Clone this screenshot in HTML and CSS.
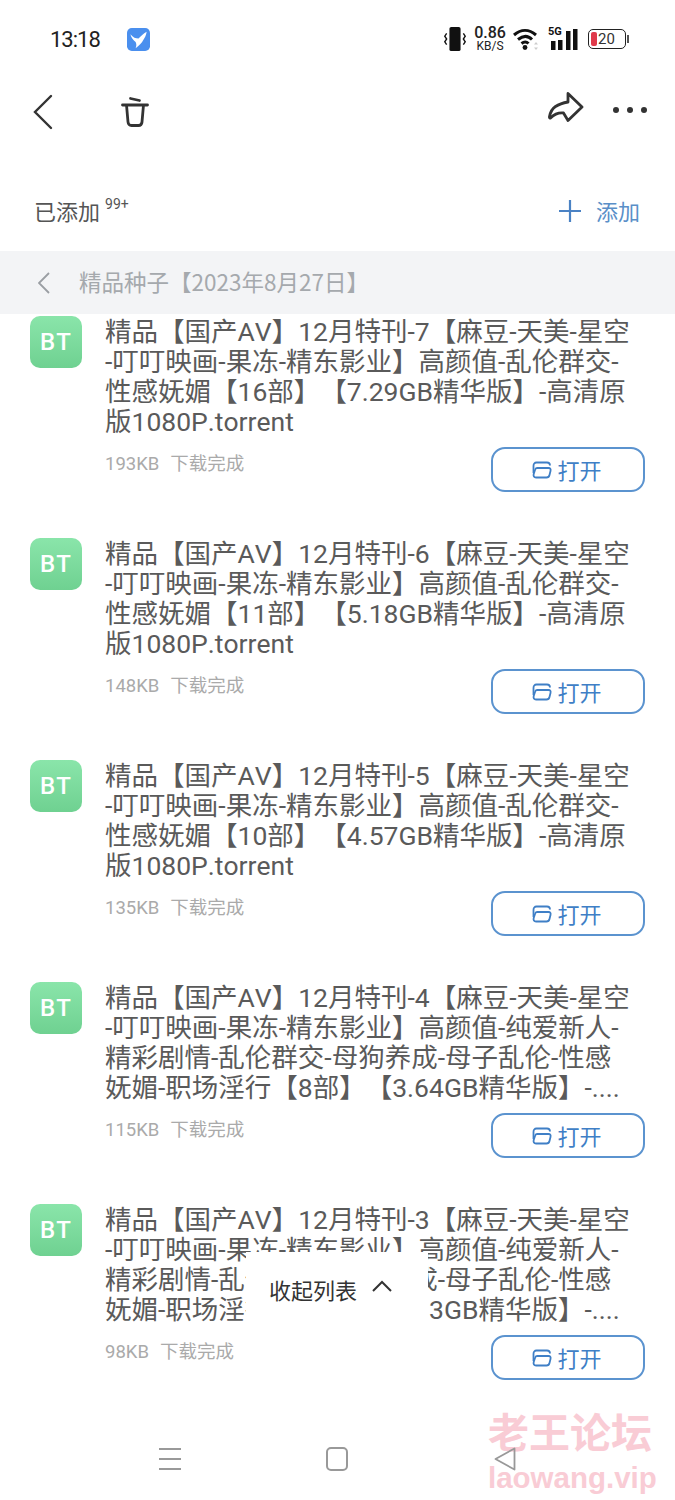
FILE: index.html
```html
<!DOCTYPE html>
<html>
<head>
  <title>下载</title>
  <meta charset="UTF-8">
  <link rel="stylesheet" href="styles.css">
</head>
<body>
<div class="page">
  <div class="status">
    <span class="time">13:18</span>
    <svg class="app" viewBox="0 0 24 24"><rect width="24" height="24" rx="5" fill="#4a8fee"/><path d="M3.500 6.500c3 3.500 5.500 4.500 8.500 4.500 2.500-2.500 5-5 8.500-7-.5 4-2 6.500-3.500 8.500-1.500 3-4.500 6-8 8.500 1-2.500 1-4.500 0-6.500-2.500-1.500-4.500-4.500-5.500-8z" fill="#fff"/></svg>
    <span class="grow"></span>
    <svg class="st-vib" viewBox="0 0 24 28"><rect x="6" y="1" width="12" height="26" rx="2" fill="#111"/><path d="M3 8l-2 3 2 3-2 3 2 3M21 8l2 3-2 3 2 3-2 3" fill="none" stroke="#111" stroke-width="1.500"/></svg>
    <span class="speed"><b>0.86</b><i>KB/S</i></span>
    <svg class="st-wifi" viewBox="0 0 26 24"><path d="M1 8c7-6 15-6 22 0M5 12.500c5-4 10-4 14 0M8.500 16.500c2.500-2 5-2 7 0" fill="none" stroke="#111" stroke-width="3"/><circle cx="12" cy="20.500" r="2.400" fill="#111"/><path d="M23 15l-2 2.500h4zM23 23l-2-2.500h4z" fill="#ccc"/></svg>
    <span class="st-net">
      <span class="g5">5G</span>
      <svg viewBox="0 0 30 22"><rect x="3" y="13" width="4.500" height="9" fill="#111"/><rect x="10" y="12" width="4.500" height="10" fill="#111"/><rect x="18" y="3" width="4.500" height="19" fill="#111"/><rect x="25" y="1" width="4.500" height="21" fill="#111"/></svg>
    </span>
    <span class="batt"><span class="batt-red"></span><span class="batt-num">20</span></span>
  </div>

  <div class="toolbar">
    <svg class="ic-back" viewBox="0 0 20 36"><path d="M18 2L2 18l16 16" fill="none" stroke="#333" stroke-width="2.400" stroke-linecap="round"/></svg>
    <svg class="ic-trash" viewBox="0 0 28 32"><path d="M1.500 9h25M9.500 2.500l9 2M5.500 9l1.500 17c.2 2 1.500 3.500 3.500 3.500h7c2 0 3.300-1.500 3.500-3.500L22.500 9" fill="none" stroke="#333" stroke-width="2.800" stroke-linecap="round"/></svg>
    <span class="grow"></span>
    <svg class="ic-share" viewBox="0 0 36 34"><path d="M20 1.500L34 15 20 28.500l-4.500-7.500c-5-.5-9 1-13 5-.8.5-1.200-.5-1-1.500 1-5 3-8 6-10 3.500-2.300 7-3.500 12.500-4.500z" fill="none" stroke="#333" stroke-width="2.800" stroke-linejoin="round"/></svg>
    <span class="dots"><i></i><i></i><i></i></span>
  </div>

  <div class="added">
    <span class="added-label">已添加</span><sup>99+</sup>
    <span class="grow"></span>
    <svg class="ic-plus" viewBox="0 0 22 22"><path d="M11 0v22M0 11h22" stroke="#4a82c4" stroke-width="2.200"/></svg>
    <span class="added-btn">添加</span>
  </div>

  <div class="crumb">
    <svg viewBox="0 0 12 22"><path d="M11 1L1 11l10 10" fill="none" stroke="#9a9ea3" stroke-width="1.800"/></svg>
    <span>精品种子【2023年8月27日】</span>
  </div>

  <div class="list">
    <div class="item">
      <div class="bt">BT</div>
      <div class="body">
        <div class="name">精品【国产AV】12月特刊-7【麻豆-天美-星空<br>-叮叮映画-果冻-精东影业】高颜值-乱伦群交-<br>性感妩媚【16部】【7.29GB精华版】-高清原<br>版1080P.torrent</div>
        <div class="foot">
          <span class="meta"><span>193KB</span><span>下载完成</span></span>
          <div class="open"><svg viewBox="0 0 20 18"><path d="M1.500 12V5c0-2 1-3.500 3-3.500h10.500c2 0 3 1 3 3"/><path d="M5 7h11.500c1.700 0 2.500 1 2 3l-1 4c-.4 1.800-1.500 2.500-3 2.500H4c-2 0-2.800-1.500-2.300-3.500L3 9c.3-1.300 1-2 2-2z"/></svg>打开</div>
        </div>
      </div>
    </div>
    <div class="item">
      <div class="bt">BT</div>
      <div class="body">
        <div class="name">精品【国产AV】12月特刊-6【麻豆-天美-星空<br>-叮叮映画-果冻-精东影业】高颜值-乱伦群交-<br>性感妩媚【11部】【5.18GB精华版】-高清原<br>版1080P.torrent</div>
        <div class="foot">
          <span class="meta"><span>148KB</span><span>下载完成</span></span>
          <div class="open"><svg viewBox="0 0 20 18"><path d="M1.500 12V5c0-2 1-3.500 3-3.500h10.500c2 0 3 1 3 3"/><path d="M5 7h11.500c1.700 0 2.500 1 2 3l-1 4c-.4 1.800-1.500 2.500-3 2.500H4c-2 0-2.800-1.500-2.300-3.500L3 9c.3-1.300 1-2 2-2z"/></svg>打开</div>
        </div>
      </div>
    </div>
    <div class="item">
      <div class="bt">BT</div>
      <div class="body">
        <div class="name">精品【国产AV】12月特刊-5【麻豆-天美-星空<br>-叮叮映画-果冻-精东影业】高颜值-乱伦群交-<br>性感妩媚【10部】【4.57GB精华版】-高清原<br>版1080P.torrent</div>
        <div class="foot">
          <span class="meta"><span>135KB</span><span>下载完成</span></span>
          <div class="open"><svg viewBox="0 0 20 18"><path d="M1.500 12V5c0-2 1-3.500 3-3.500h10.500c2 0 3 1 3 3"/><path d="M5 7h11.500c1.700 0 2.500 1 2 3l-1 4c-.4 1.800-1.500 2.500-3 2.500H4c-2 0-2.800-1.500-2.300-3.500L3 9c.3-1.300 1-2 2-2z"/></svg>打开</div>
        </div>
      </div>
    </div>
    <div class="item">
      <div class="bt">BT</div>
      <div class="body">
        <div class="name">精品【国产AV】12月特刊-4【麻豆-天美-星空<br>-叮叮映画-果冻-精东影业】高颜值-纯爱新人-<br>精彩剧情-乱伦群交-母狗养成-母子乱伦-性感<br>妩媚-职场淫行【8部】【3.64GB精华版】-....</div>
        <div class="foot">
          <span class="meta"><span>115KB</span><span>下载完成</span></span>
          <div class="open"><svg viewBox="0 0 20 18"><path d="M1.500 12V5c0-2 1-3.500 3-3.500h10.500c2 0 3 1 3 3"/><path d="M5 7h11.500c1.700 0 2.500 1 2 3l-1 4c-.4 1.800-1.500 2.500-3 2.500H4c-2 0-2.800-1.500-2.300-3.500L3 9c.3-1.300 1-2 2-2z"/></svg>打开</div>
        </div>
      </div>
    </div>
    <div class="item">
      <div class="bt">BT</div>
      <div class="body">
        <div class="name">精品【国产AV】12月特刊-3【麻豆-天美-星空<br>-叮叮映画-果冻-精东影业】高颜值-纯爱新人-<br>精彩剧情-乱伦群交-母狗养成-母子乱伦-性感<br>妩媚-职场淫行【8部】【3.13GB精华版】-....</div>
        <div class="foot">
          <span class="meta"><span>98KB</span><span>下载完成</span></span>
          <div class="open"><svg viewBox="0 0 20 18"><path d="M1.500 12V5c0-2 1-3.500 3-3.500h10.500c2 0 3 1 3 3"/><path d="M5 7h11.500c1.700 0 2.500 1 2 3l-1 4c-.4 1.800-1.500 2.500-3 2.500H4c-2 0-2.800-1.500-2.300-3.500L3 9c.3-1.300 1-2 2-2z"/></svg>打开</div>
        </div>
      </div>
    </div>
  </div>

  <div class="collapse">
    <span>收起列表</span>
    <svg viewBox="0 0 20 12"><path d="M1 11l9-9 9 9" fill="none" stroke="#333" stroke-width="2"/></svg>
  </div>

  <div class="watermark">
    <div class="wm-cn">老王论坛</div>
    <div class="wm-en">laowang.vip</div>
  </div>

  <div class="nav">
    <span class="nav-menu"><i></i><i></i><i></i></span>
    <span class="nav-home"></span>
    <svg class="nav-back" viewBox="0 0 22 24"><path d="M20.500 1.500v21L1.500 12z" fill="none" stroke="#999" stroke-width="1.800" stroke-linejoin="round"/></svg>
  </div>
</div>
</body>
</html>
```

FILE: styles.css
```css
* { box-sizing: border-box; }
html, body { margin: 0; padding: 0; }
body {
  background: #fff;
  color: #555;
  font-family: Roboto, "Noto Sans CJK SC", sans-serif;
  font-kerning: none;
  text-spacing-trim: space-all;
}
.page {
  position: relative;
  width: 675px;
  height: 1500px;
  overflow: hidden;
}
.grow { flex: 1; }

/* status bar */
.status {
  display: flex;
  align-items: center;
  height: 78px;
  padding: 0 49px 0 50px;
}
.time { font-size: 22px; letter-spacing: -1px; color: #222; width: 50px; margin-right: 27px; }
.app { width: 23px; height: 23px; }
.st-vib { width: 24px; height: 26px; }
.speed {
  display: flex;
  flex-direction: column;
  align-items: center;
  width: 32px;
  margin-left: 7px;
  color: #222;
}
.speed b { font-weight: 500; font-size: 16px; line-height: 14px; }
.speed i { font-style: normal; font-size: 12px; line-height: 12px; }
.st-wifi { width: 26px; height: 24px; margin-left: 7px; }
.st-net { position: relative; display: block; width: 30px; height: 22px; margin-left: 9px; }
.st-net svg { width: 30px; height: 22px; display: block; }
.g5 { position: absolute; left: 0; top: -2px; font-size: 11px; line-height: 11px; font-weight: 700; color: #111; }
.batt {
  display: flex;
  align-items: center;
  position: relative;
  width: 38px;
  height: 20px;
  margin-left: 10px;
  border: 1.500px solid #222;
  border-radius: 5px;
  padding-left: 2px;
}
.batt::after {
  content: "";
  position: absolute;
  right: -4px;
  top: 5px;
  width: 2px;
  height: 8px;
  background: #555;
}
.batt-red { width: 6px; height: 14px; background: #e0394a; border-radius: 2px; }
.batt-num { font-size: 15px; color: #333; margin-left: 1px; }

/* top toolbar */
.toolbar {
  display: flex;
  align-items: center;
  height: 68px;
  padding: 0 28px 0 33px;
}
.ic-back { width: 20px; height: 36px; }
.ic-trash { width: 28px; height: 32px; margin-left: 68px; }
.ic-share { width: 36px; height: 34px; margin-top: -6px; }
.dots { display: flex; gap: 8px; margin-left: 29px; margin-top: -4px; }
.dots i { width: 6px; height: 6px; background: #333; border-radius: 50%; }

.added {
  display: flex;
  align-items: center;
  height: 105px;
  padding: 22px 35px 0 34px;
}
.added-label { font-size: 22px; color: #555; }
.added sup { font-size: 14px; color: #555; margin: -12px 0 0 5px; line-height: 1; }
.ic-plus { width: 22px; height: 22px; margin: 2px 0 0 2px; }
.added-btn { font-size: 22px; color: #5a8fc8; margin-left: 15px; }

.crumb {
  display: flex;
  align-items: center;
  height: 63px;
  padding: 0 0 4px 38px;
  background: #f3f4f6;
  color: #a5a9ad;
  font-family: "Noto Sans CJK SC", sans-serif;
  font-size: 22.500px;
}
.crumb svg { width: 12px; height: 22px; margin: 4px 29px 0 0; }

/* download list */
.list { padding-top: 2px; }
.item {
  display: flex;
  height: 222px;
  padding-left: 30px;
}
.bt {
  display: flex;
  align-items: center;
  justify-content: center;
  flex: none;
  width: 52px;
  height: 52px;
  border-radius: 10px;
  background: linear-gradient(#8ae5aa, #6fd191);
  color: #fff;
  font-size: 24px;
  font-weight: 500;
  letter-spacing: 1px;
}
.body { flex: 1; padding: 1px 30px 0 23px; }
.name {
  font-size: 26.500px;
  line-height: 30px;
  height: 120px;
  color: #5a5a5a;
  white-space: nowrap;
}
.foot { display: flex; justify-content: space-between; margin-top: 10px; }
.meta {
  display: flex;
  gap: 11px;
  padding-top: 4px;
  font-size: 18.500px;
  line-height: 26px;
  color: #aaa;
}
.open {
  display: flex;
  align-items: center;
  justify-content: center;
  gap: 5px;
  width: 154px;
  height: 45px;
  padding: 0 2px 2px 0;
  border: 2px solid #5b93cf;
  border-radius: 14px;
  color: #3f7fc6;
  font-size: 22px;
}
.open svg { width: 20px; height: 18px; fill: none; stroke: #3f7fc6; stroke-width: 1.800; margin-top: 2px; }

/* overlays */
.collapse {
  position: absolute;
  left: 246px;
  top: 1252px;
  display: flex;
  align-items: center;
  gap: 15px;
  width: 182px;
  height: 71px;
  padding: 3px 0 0 23px;
  background: #fff;
  color: #333;
  font-size: 22px;
}
.collapse svg { width: 20px; height: 12px; margin-top: -6px; }
.watermark {
  position: absolute;
  left: 488px;
  top: 1408px;
  color: #f9ccd5;
  font-weight: 700;
}
.wm-cn { font-size: 41px; line-height: 52px; }
.wm-en { font-family: "Liberation Sans", sans-serif; font-size: 29.500px; line-height: 36px; }

.nav {
  position: relative;
  display: grid;
  grid-template-columns: repeat(3, 1fr);
  justify-items: center;
  align-items: center;
  height: 50px;
  margin-top: 8px;
  padding: 0 86px;
}
.nav-menu { display: flex; flex-direction: column; gap: 8px; width: 22px; }
.nav-menu i { height: 2px; background: #999; }
.nav-home { width: 22px; height: 24px; border: 2px solid #999; border-radius: 5px; }
.nav-back { width: 22px; height: 24px; }
```
